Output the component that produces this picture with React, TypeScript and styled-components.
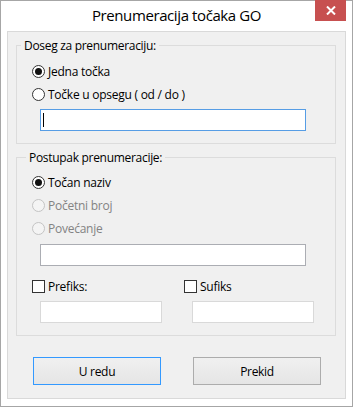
import React from "react";
import styled, { createGlobalStyle } from "styled-components";

const GlobalStyle = createGlobalStyle`
  html, body {
    margin: 0;
    padding: 0;
    background: #fff;
  }
  body {
    font-family: "Open Sans", "Noto Sans", sans-serif;
    font-size: 12px;
    color: #000;
  }
`;

const Window = styled.div`
  box-sizing: border-box;
  width: 353px;
  height: 407px;
  border: 1px solid #a6a6a6;
  background: #fff;
  padding: 0 6px 7px;
  display: flex;
  flex-direction: column;
`;

const TitleBar = styled.div`
  height: 30px;
  display: grid;
  grid-template-columns: 1fr auto 1fr;
  align-items: start;
`;

const Title = styled.div`
  grid-column: 2;
  font-size: 15px;
  line-height: 28px;
  letter-spacing: -0.4px;
  white-space: nowrap;
`;

const CloseButton = styled.div`
  grid-column: 3;
  justify-self: end;
  width: 31px;
  height: 21px;
  margin-top: -1px;
  background: #c75050;
  display: flex;
  align-items: center;
  justify-content: center;
`;

const Client = styled.div`
  flex: 1;
  border: 1px solid #d9d9d9;
  background: #f0f0f0;
  padding: 0 9px 0 8px;
  display: flex;
  flex-direction: column;
`;

const Group = styled.fieldset`
  margin: 5px 0 0;
  padding: 0;
  min-width: 0;
  border: 1px solid #dcdcdc;
`;

const Legend = styled.legend<{ $indent: number }>`
  margin-left: ${(p) => p.$indent}px;
  padding: 0 3px;
  line-height: 17px;
  letter-spacing: -0.3px;
`;

const GroupBody = styled.div<{ $top: number }>`
  display: flex;
  flex-direction: column;
  align-items: flex-start;
  padding: ${(p) => p.$top}px 0 12px 15px;
`;

const OptionRow = styled.div<{ $disabled?: boolean }>`
  display: flex;
  align-items: center;
  height: 23px;
  letter-spacing: -0.25px;
  white-space: nowrap;
  color: ${(p) => (p.$disabled ? "#838383" : "#000")};
`;

const RadioMark = styled.span<{ $checked?: boolean; $disabled?: boolean }>`
  box-sizing: border-box;
  width: 13px;
  height: 13px;
  margin-right: 3px;
  border-radius: 50%;
  border: 1px solid ${(p) => (p.$disabled ? "#c4c4c4" : "#333")};
  background: ${(p) => (p.$disabled ? "#f4f4f4" : "#fff")};
  display: flex;
  align-items: center;
  justify-content: center;

  &::after {
    content: "";
    display: ${(p) => (p.$checked ? "block" : "none")};
    width: 7px;
    height: 7px;
    border-radius: 50%;
    background: #111;
  }
`;

const CheckMark = styled.span`
  box-sizing: border-box;
  width: 13px;
  height: 13px;
  margin-right: 3px;
  border: 1px solid #333;
  background: #fff;
`;

const TextBox = styled.div<{ $tone: "focused" | "normal" | "disabled"; $width: number; $top: number }>`
  box-sizing: border-box;
  width: ${(p) => p.$width}px;
  height: 22px;
  margin: ${(p) => p.$top}px 0 0 8px;
  padding-left: 2px;
  background: #fff;
  border: 1px solid
    ${(p) => (p.$tone === "focused" ? "#569de5" : p.$tone === "normal" ? "#abadb3" : "#d9d9d9")};
  display: flex;
  align-items: center;
`;

const Caret = styled.span`
  width: 1px;
  height: 14px;
  background: #000;
`;

const AffixGrid = styled.div`
  display: grid;
  grid-template-columns: 152px 1fr;
  margin-top: 9px;
  align-self: stretch;
`;

const AffixColumn = styled.div`
  display: flex;
  flex-direction: column;
`;

const ButtonRow = styled.div`
  display: flex;
  gap: 32px;
  margin: 21px 0 0 17px;
`;

const Button = styled.button<{ $default?: boolean }>`
  box-sizing: border-box;
  width: 128px;
  height: 28px;
  padding: 0;
  font-family: inherit;
  font-size: 12px;
  letter-spacing: -0.3px;
  color: #000;
  border: 1px solid ${(p) => (p.$default ? "#3399ff" : "#acacac")};
  background: linear-gradient(#f0f0f0, #e5e5e5);
`;

const Radio = ({ label, checked, disabled }: { label: string; checked?: boolean; disabled?: boolean }) => (
  <OptionRow $disabled={disabled}>
    <RadioMark $checked={checked} $disabled={disabled} />
    {label}
  </OptionRow>
);

const App = () => {
  return (
    <>
      <GlobalStyle />
      <Window>
        <TitleBar>
          <Title>Prenumeracija točaka GO</Title>
          <CloseButton>
            <svg width="10" height="9" viewBox="0 0 10 9">
              <path d="M1 0.5 L9 8.5 M9 0.5 L1 8.5" stroke="#fff" strokeWidth="2" />
            </svg>
          </CloseButton>
        </TitleBar>

        <Client>
          <Group>
            <Legend $indent={4}>Doseg za prenumeraciju:</Legend>
            <GroupBody $top={6}>
              <Radio label="Jedna točka" checked />
              <Radio label="Točke u opsegu ( od / do )" />
              <TextBox $tone="focused" $width={266} $top={3}>
                <Caret />
              </TextBox>
            </GroupBody>
          </Group>

          <Group>
            <Legend $indent={9}>Postupak prenumeracije:</Legend>
            <GroupBody $top={5}>
              <Radio label="Točan naziv" checked />
              <Radio label="Početni broj" disabled />
              <Radio label="Povećanje" disabled />
              <TextBox $tone="normal" $width={266} $top={4} />
              <AffixGrid>
                <AffixColumn>
                  <OptionRow>
                    <CheckMark />
                    Prefiks:
                  </OptionRow>
                  <TextBox $tone="disabled" $width={122} $top={3} />
                </AffixColumn>
                <AffixColumn>
                  <OptionRow>
                    <CheckMark />
                    Sufiks
                  </OptionRow>
                  <TextBox $tone="disabled" $width={122} $top={3} />
                </AffixColumn>
              </AffixGrid>
            </GroupBody>
          </Group>

          <ButtonRow>
            <Button $default>U redu</Button>
            <Button>Prekid</Button>
          </ButtonRow>
        </Client>
      </Window>
    </>
  );
};

export default App;
